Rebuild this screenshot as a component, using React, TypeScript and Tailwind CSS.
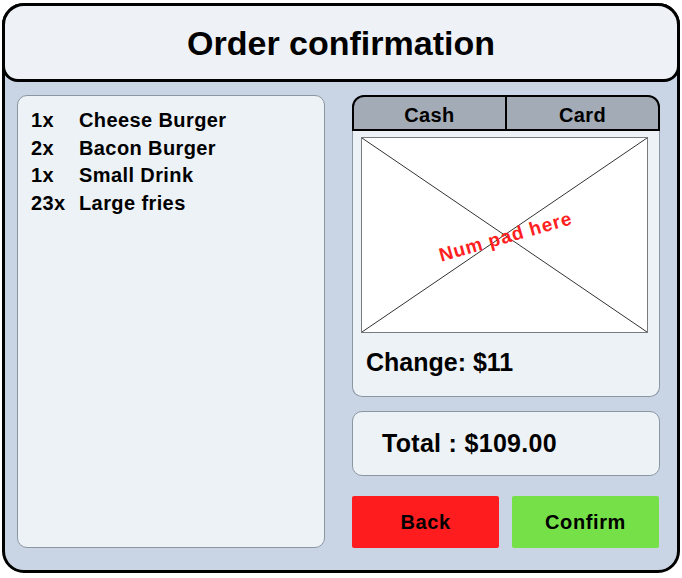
const items = [
  { qty: "1x", name: "Cheese Burger" },
  { qty: "2x", name: "Bacon Burger" },
  { qty: "1x", name: "Small Drink" },
  { qty: "23x", name: "Large fries" },
];

const App = () => {
  return (
    <div className="w-[682px] h-[578px] bg-white pt-[3px] pl-[2px] font-['Liberation_Sans',Arial,sans-serif] font-bold text-black">
      <div className="w-[678px] h-[570px] border-[3px] border-black rounded-[22px] bg-[#c9d5e4] flex flex-col">
        {/* header */}
        <div className="-mx-[3px] -mt-[3px] h-[79px] border-[3px] border-black rounded-t-[22px] rounded-b-[16px] bg-[#eef2f7] flex items-center justify-center">
          <h1 className="text-[34px] leading-none pt-[1px]">Order confirmation</h1>
        </div>

        <div className="flex gap-[27px] pl-[12px] pt-[13px]">
          {/* order list */}
          <div className="w-[308px] h-[453px] border border-[#8c96a1] rounded-[10px] bg-[#edf2f7] pl-[13px] pt-[11px]">
            {items.map((item, i) => (
              <div key={i} className="flex text-[20px] leading-[27.5px] tracking-[0.4px]">
                <span className="w-[48px]">{item.qty}</span>
                <span>{item.name}</span>
              </div>
            ))}
          </div>

          {/* payment column */}
          <div className="w-[308px] flex flex-col">
            <div className="h-[36px] flex border-2 border-black rounded-t-[12px] bg-[#a3acb6] text-[20px] tracking-[0.4px]">
              <div className="w-[153px] border-r-2 border-black flex items-center justify-center pt-[4px]">Cash</div>
              <div className="flex-1 flex items-center justify-center pt-[3px]">Card</div>
            </div>
            <div className="h-[266px] border border-t-0 border-[#8c96a1] rounded-b-[10px] bg-[#edf2f7] pl-[8px] pr-[11px] pt-[6px]">
              <div className="relative h-[196px] border border-[#7a7a7a] bg-white overflow-hidden">
                <svg className="absolute inset-0 w-full h-full" viewBox="0 0 100 100" preserveAspectRatio="none">
                  <line x1="0" y1="0" x2="100" y2="100" stroke="#333" strokeWidth="1" vectorEffect="non-scaling-stroke" />
                  <line x1="100" y1="0" x2="0" y2="100" stroke="#333" strokeWidth="1" vectorEffect="non-scaling-stroke" />
                </svg>
                <div className="absolute inset-0 flex items-center justify-center">
                  <span className="text-[19px] tracking-[0.9px] text-[#ff1f1f] -rotate-[16deg] translate-x-[1px] translate-y-[2px]">Num pad here</span>
                </div>
              </div>
              <div className="mt-[14px] ml-[5px] text-[25px] leading-[30px]">Change: $11</div>
            </div>

            <div className="mt-[14px] h-[65px] border border-[#8c96a1] rounded-[10px] bg-[#edf2f7] flex items-center pl-[29px] text-[25px] tracking-[0.3px]">
              Total : $109.00
            </div>

            <div className="mt-[20px] flex gap-[13px]">
              <button className="w-[147px] h-[52px] bg-[#ff1c1f] rounded-[2px] text-[20px] tracking-[0.6px]">Back</button>
              <button className="w-[147px] h-[52px] bg-[#75e048] rounded-[2px] text-[20px] tracking-[0.6px]">Confirm</button>
            </div>
          </div>
        </div>
      </div>
    </div>
  );
};

export default App;
